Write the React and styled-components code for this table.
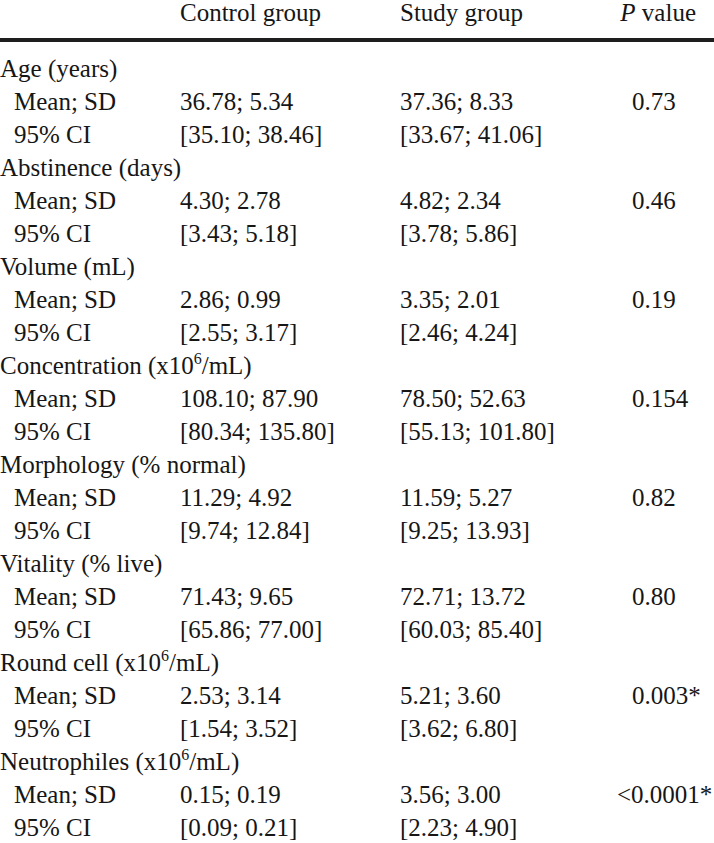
import React from 'react';
import styled, { createGlobalStyle } from 'styled-components';

const Global = createGlobalStyle`
  body {
    margin: 0;
    background: #fff;
    color: #161616;
    font-family: "Liberation Serif", "Times New Roman", serif;
  }
`;

const Table = styled.div`
  width: 714px;
  font-size: 25px;
  line-height: 33px;
`;

const Grid = styled.div`
  display: grid;
  grid-template-columns: 180px 220px 232px 82px;
`;

const Head = styled(Grid)`
  height: 38px;
  line-height: 26px;
  border-bottom: 4px solid #1e1e1e;
  margin-bottom: 10px;
`;

const HeadCell = styled.div`
  display: flex;
  justify-content: ${(p) => (p.$right ? 'flex-end' : 'flex-start')};
  padding-right: ${(p) => (p.$right ? '18px' : '0')};
  white-space: nowrap;
`;

const Group = styled.div`
  line-height: 33px;
`;

const Label = styled.div`
  padding-left: ${(p) => (p.$sub ? '14px' : '0')};
  white-space: nowrap;
`;

const Cell = styled.div`
  white-space: nowrap;
`;

const PCell = styled.div`
  white-space: nowrap;
`;

const Lt = styled.span`
  margin-left: -15px;
`;

const Sup = styled.sup`
  font-size: 16px;
  line-height: 0;
  vertical-align: 10px;
`;

const groups = [
  { title: 'Age (years)', m: ['36.78; 5.34', '37.36; 8.33'], ci: ['[35.10; 38.46]', '[33.67; 41.06]'], p: '0.73' },
  { title: 'Abstinence (days)', m: ['4.30; 2.78', '4.82; 2.34'], ci: ['[3.43; 5.18]', '[3.78; 5.86]'], p: '0.46' },
  { title: 'Volume (mL)', m: ['2.86; 0.99', '3.35; 2.01'], ci: ['[2.55; 3.17]', '[2.46; 4.24]'], p: '0.19' },
  { title: 'Concentration (x10', unit: '/mL)', m: ['108.10; 87.90', '78.50; 52.63'], ci: ['[80.34; 135.80]', '[55.13; 101.80]'], p: '0.154' },
  { title: 'Morphology (% normal)', m: ['11.29; 4.92', '11.59; 5.27'], ci: ['[9.74; 12.84]', '[9.25; 13.93]'], p: '0.82' },
  { title: 'Vitality (% live)', m: ['71.43; 9.65', '72.71; 13.72'], ci: ['[65.86; 77.00]', '[60.03; 85.40]'], p: '0.80' },
  { title: 'Round cell (x10', unit: '/mL)', m: ['2.53; 3.14', '5.21; 3.60'], ci: ['[1.54; 3.52]', '[3.62; 6.80]'], p: '0.003*' },
  { title: 'Neutrophiles (x10', unit: '/mL)', m: ['0.15; 0.19', '3.56; 3.00'], ci: ['[0.09; 0.21]', '[2.23; 4.90]'], p: '<0.0001*' },
];

function PValue({ v }) {
  if (v.startsWith('<')) {
    return (
      <PCell>
        <Lt>&lt;</Lt>
        {v.slice(1)}
      </PCell>
    );
  }
  return <PCell>{v}</PCell>;
}

export default function App() {
  return (
    <Table>
      <Global />
      <Head>
        <HeadCell />
        <HeadCell>Control group</HeadCell>
        <HeadCell>Study group</HeadCell>
        <HeadCell $right>
          <i>P</i>&nbsp;value
        </HeadCell>
      </Head>
      {groups.map((g) => (
        <Group key={g.title}>
          <Grid>
            <Label>
              {g.title}
              {g.unit && (
                <>
                  <Sup>6</Sup>
                  {g.unit}
                </>
              )}
            </Label>
          </Grid>
          <Grid>
            <Label $sub>Mean; SD</Label>
            <Cell>{g.m[0]}</Cell>
            <Cell>{g.m[1]}</Cell>
            <PValue v={g.p} />
          </Grid>
          <Grid>
            <Label $sub>95% CI</Label>
            <Cell>{g.ci[0]}</Cell>
            <Cell>{g.ci[1]}</Cell>
            <Cell />
          </Grid>
        </Group>
      ))}
    </Table>
  );
}
